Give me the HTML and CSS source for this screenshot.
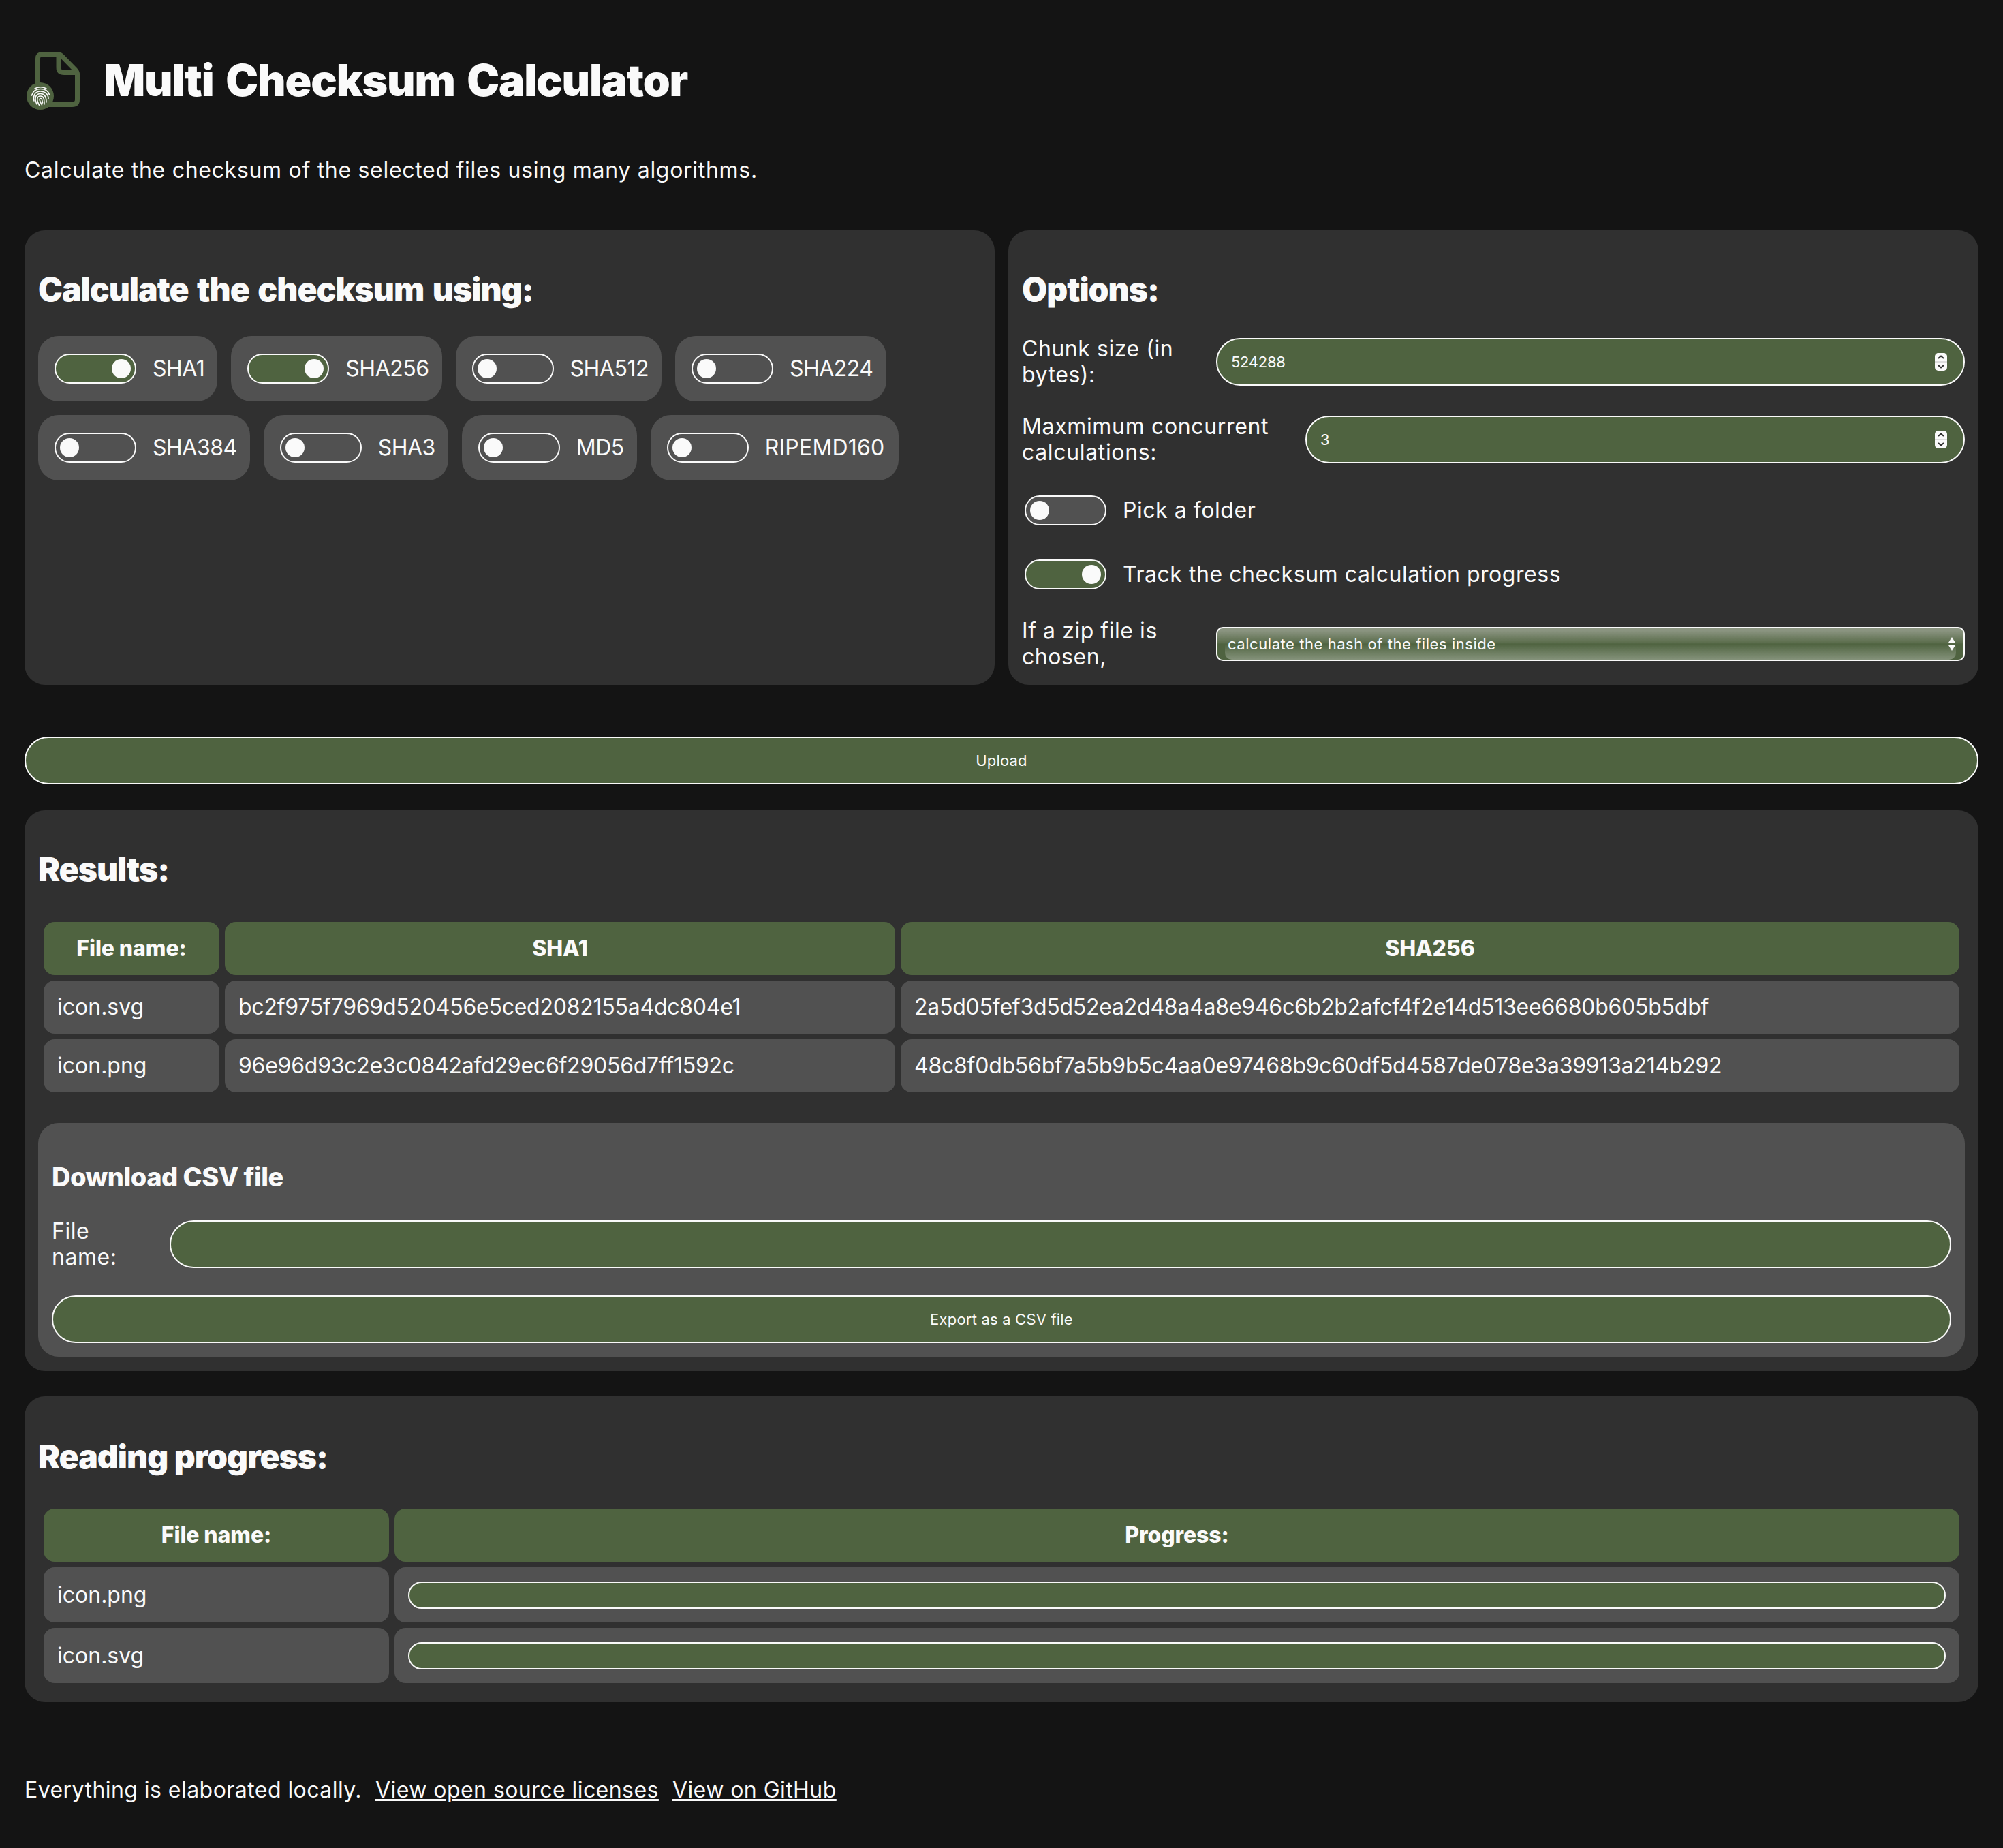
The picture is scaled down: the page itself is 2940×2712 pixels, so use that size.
FILE: index.html
```html
<!DOCTYPE html>
<html lang="en">
<head>
    <meta charset="UTF-8">
    <title>Multi Checksum Calculator</title>
    <link rel="stylesheet" href="styles.css">
</head>
<body>
    <header class="title-row">
        <svg class="logo" width="84" height="96" viewBox="0 0 84 96">
            <path d="M26 9.500 H49 Q52 9.500 55 12.500 L74.500 32.500 Q77.500 35.500 77.500 39 V76 Q77.500 83.500 70 83.500 H26 Q19.500 83.500 19.500 76 V16 Q19.500 9.500 26 9.500 Z" fill="none" stroke="#4f6340" stroke-width="7"/>
            <path d="M50 11 V29 Q50 36.500 58 36.500 H76" fill="none" stroke="#4f6340" stroke-width="7"/>
            <circle cx="23" cy="71" r="20" fill="#4f6340"/>
            <g fill="none" stroke="#fafafa" stroke-width="1.600" stroke-linecap="round">
                <path d="M15 60 Q23.500 55.500 32 60"/>
                <path d="M10.500 70 Q13 60.500 23.500 60.500 Q34 60.500 36.500 69"/>
                <path d="M14 78 C12 68 17 64 23.500 64 C30 64 35 68 35 75"/>
                <path d="M18 83 C14 74 16 67.500 23.500 67.500 C30 67.500 32 72 32 80"/>
                <path d="M22 85 C17 77 18 71 23.500 71 C28 71 29 75 29 83"/>
                <path d="M25.500 84 C22 78 21 74.500 23.500 74.500 C26 74.500 26 78 26.500 81"/>
            </g>
        </svg>
        <h1>Multi Checksum Calculator</h1>
    </header>
    <p class="intro">Calculate the checksum of the selected files using many algorithms.</p>

    <div class="top-grid">
        <section class="panel">
            <h2>Calculate the checksum using:</h2>
            <div class="chips">
                <label class="chip"><span class="toggle on"></span>SHA1</label>
                <label class="chip"><span class="toggle on"></span>SHA256</label>
                <label class="chip"><span class="toggle"></span>SHA512</label>
                <label class="chip"><span class="toggle"></span>SHA224</label>
                <label class="chip"><span class="toggle"></span>SHA384</label>
                <label class="chip"><span class="toggle"></span>SHA3</label>
                <label class="chip"><span class="toggle"></span>MD5</label>
                <label class="chip wide"><span class="toggle"></span>RIPEMD160</label>
            </div>
        </section>
        <section class="panel options">
            <h2>Options:</h2>
            <div class="field chunk">
                <label>Chunk size (in bytes):</label>
                <div class="number-wrap">
                    <input class="text-input" type="text" value="524288">
                    <svg class="spinner" width="18" height="26" viewBox="0 0 18 26">
                        <rect width="18" height="26" rx="5" fill="#fafafa"/>
                        <rect y="12" width="18" height="2" fill="#ddd"/>
                        <path d="M5 8 L9 4.500 L13 8 M5 18 L9 21.500 L13 18" fill="none" stroke="#303030" stroke-width="2"/>
                    </svg>
                </div>
            </div>
            <div class="field concurrent">
                <label>Maxmimum concurrent calculations:</label>
                <div class="number-wrap">
                    <input class="text-input" type="text" value="3">
                    <svg class="spinner" width="18" height="26" viewBox="0 0 18 26">
                        <rect width="18" height="26" rx="5" fill="#fafafa"/>
                        <rect y="12" width="18" height="2" fill="#ddd"/>
                        <path d="M5 8 L9 4.500 L13 8 M5 18 L9 21.500 L13 18" fill="none" stroke="#303030" stroke-width="2"/>
                    </svg>
                </div>
            </div>
            <label class="switch-row first"><span class="toggle grey"></span>Pick a folder</label>
            <label class="switch-row"><span class="toggle on"></span>Track the checksum calculation progress</label>
            <div class="field zip">
                <label>If a zip file is chosen,</label>
                <div class="select-wrap">
                    <select class="select-box">
                        <option>calculate the hash of the files inside</option>
                    </select>
                    <svg class="arrows" width="10" height="20" viewBox="0 0 10 20">
                        <path d="M0 8 L5 0 L10 8 Z M0 12 L10 12 L5 20 Z" fill="#fafafa"/>
                    </svg>
                </div>
            </div>
        </section>
    </div>

    <button class="pill-button upload">Upload</button>

    <section class="panel results">
        <h2>Results:</h2>
        <table class="result-table">
            <colgroup><col class="c-name"><col class="c-sha1"><col class="c-sha256"></colgroup>
            <thead>
                <tr><th>File name:</th><th>SHA1</th><th>SHA256</th></tr>
            </thead>
            <tbody>
                <tr><td>icon.svg</td><td class="hash">bc2f975f7969d520456e5ced2082155a4dc804e1</td><td class="hash">2a5d05fef3d5d52ea2d48a4a8e946c6b2b2afcf4f2e14d513ee6680b605b5dbf</td></tr>
                <tr><td>icon.png</td><td class="hash">96e96d93c2e3c0842afd29ec6f29056d7ff1592c</td><td class="hash">48c8f0db56bf7a5b9b5c4aa0e97468b9c60df5d4587de078e3a39913a214b292</td></tr>
            </tbody>
        </table>
        <div class="download-box">
            <h3>Download CSV file</h3>
            <div class="field csv-name">
                <label>File name:</label>
                <input class="text-input" type="text">
            </div>
            <button class="pill-button export">Export as a CSV file</button>
        </div>
    </section>

    <section class="panel progress-panel">
        <h2>Reading progress:</h2>
        <table class="result-table progress-table">
            <colgroup><col class="p-name"><col class="p-bar"></colgroup>
            <thead>
                <tr><th>File name:</th><th>Progress:</th></tr>
            </thead>
            <tbody>
                <tr><td>icon.png</td><td><div class="bar"></div></td></tr>
                <tr><td>icon.svg</td><td><div class="bar"></div></td></tr>
            </tbody>
        </table>
    </section>

    <footer>
        <span>Everything is elaborated locally.</span>
        <a href="#">View open source licenses</a>
        <a href="#">View on GitHub</a>
    </footer>
</body>
</html>
```

FILE: styles.css
```css
* {
    box-sizing: border-box;
}
body {
    font-family: Inter, "Open Sans", sans-serif;
    font-size: 32px;
    line-height: 38px;
    letter-spacing: 0.55px;
    background-color: #141414;
    color: #fafafa;
    margin: 0;
    padding: 0 36px;
    height: 2712px;
    overflow: hidden;
}
.title-row {
    display: flex;
    align-items: center;
    gap: 32px;
    height: 96px;
    margin-top: 70px;
}
.logo {
    flex: none;
}
h1 {
    font-size: 64px;
    line-height: 76px;
    font-weight: 900;
    letter-spacing: -1.1px;
    word-spacing: 6px;
    margin: 0;
}
.intro {
    margin: 65px 0 0;
    height: 38px;
    letter-spacing: 0.7px;
}
.top-grid {
    display: grid;
    grid-template-columns: 1fr 1fr;
    gap: 20px;
    margin-top: 69px;
}
.panel {
    background: #303030;
    border-radius: 30px;
    padding: 0 20px;
}
h2 {
    font-size: 48px;
    line-height: 58px;
    font-weight: 900;
    letter-spacing: -1px;
    word-spacing: 4px;
    margin: 0;
    padding-top: 58px;
}
.top-grid .panel {
    height: 667px;
}
.chips {
    display: flex;
    flex-wrap: wrap;
    gap: 20px;
    margin-top: 39px;
}
.chip {
    display: flex;
    align-items: center;
    gap: 24px;
    height: 96px;
    padding: 0 19px 0 24px;
    background: #515151;
    border-radius: 30px;
    letter-spacing: -0.5px;
}
.chip.wide {
    padding-right: 21px;
    letter-spacing: 0.2px;
}
.toggle {
    flex: none;
    display: block;
    position: relative;
    width: 120px;
    height: 44px;
    border: 2px solid #fafafa;
    border-radius: 22px;
}
.toggle::after {
    content: "";
    position: absolute;
    top: 6px;
    left: 6px;
    width: 28px;
    height: 28px;
    border-radius: 50%;
    background: #fafafa;
}
.toggle.on {
    background: #4f6340;
}
.toggle.on::after {
    left: 82px;
}
.toggle.grey {
    background: #515151;
}
.field {
    display: flex;
    align-items: center;
    gap: 20px;
}
.field label {
    flex: none;
}
.chunk {
    margin-top: 39px;
}
.chunk label {
    width: 265px;
}
.concurrent {
    margin-top: 38px;
    letter-spacing: 0.65px;
}
.concurrent label {
    width: 396px;
}
.number-wrap {
    position: relative;
    flex: 1;
}
.text-input {
    display: block;
    width: 100%;
    height: 70px;
    padding: 0 20px;
    background: #4f6340;
    border: 2px solid #fafafa;
    border-radius: 35px;
    color: #fafafa;
    font-family: inherit;
    font-size: 22px;
    letter-spacing: -0.3px;
}
.spinner {
    position: absolute;
    top: 22px;
    right: 26px;
}
.switch-row {
    display: flex;
    align-items: center;
    gap: 24px;
    height: 44px;
    margin: 50px 0 0 4px;
}
.switch-row.first {
    margin-top: 44px;
}
.zip {
    margin-top: 42px;
}
.zip label {
    width: 265px;
}
.select-wrap {
    position: relative;
    flex: 1;
    height: 50px;
    border: 2px solid #fafafa;
    border-radius: 10px;
    overflow: hidden;
    background: linear-gradient(#8c9682, #8a9480 8%, #5a6c4b 47%, #4f6340 50%);
}
.select-wrap::before {
    content: "";
    position: absolute;
    left: 11px;
    right: 11px;
    top: 50%;
    bottom: 0;
    border-radius: 0 0 10px 10px;
    background: linear-gradient(#4f6340, #84927a);
}
.select-box {
    position: relative;
    display: block;
    width: 100%;
    height: 100%;
    padding: 0 15px;
    appearance: none;
    background: transparent;
    border: none;
    color: #fafafa;
    font-family: inherit;
    font-size: 22px;
    letter-spacing: 0.55px;
}
.arrows {
    position: absolute;
    top: 13px;
    right: 12px;
}
.pill-button {
    display: block;
    width: 100%;
    height: 70px;
    background: #4f6340;
    border: 2px solid #fafafa;
    border-radius: 35px;
    color: #fafafa;
    font-family: inherit;
    font-size: 22px;
    letter-spacing: 0.2px;
}
.upload {
    margin-top: 76px;
}
.results {
    margin-top: 38px;
    height: 823px;
}
.result-table {
    width: 100%;
    table-layout: fixed;
    border-spacing: 8px;
    margin-top: 40px;
}
.result-table th,
.result-table td {
    height: 78px;
    padding: 0 20px;
    border-radius: 16px;
    line-height: 38px;
}
.result-table th {
    background: #4f6340;
    font-weight: 800;
    letter-spacing: -0.1px;
    text-align: center;
}
.result-table td {
    background: #515151;
    letter-spacing: 0;
}
.result-table td.hash {
    letter-spacing: -0.24px;
}
.c-name {
    width: 258px;
}
.c-sha1 {
    width: 984px;
}
.download-box {
    background: #515151;
    border-radius: 30px;
    padding: 0 20px;
    height: 343px;
    margin-top: 37px;
}
h3 {
    font-size: 38px;
    line-height: 46px;
    font-weight: 800;
    letter-spacing: -0.5px;
    margin: 0;
    padding-top: 56px;
}
.csv-name {
    margin-top: 38px;
}
.csv-name label {
    width: 153px;
}
.csv-name .text-input {
    flex: 1;
    width: auto;
}
.export {
    margin-top: 37px;
}
.progress-panel {
    margin-top: 37px;
    height: 449px;
}
.progress-panel h2 {
    padding-top: 60px;
    word-spacing: 1px;
}
.progress-panel .result-table {
    margin-top: 39px;
}
.p-name {
    width: 507px;
}
.progress-table td {
    height: 81px;
}
.bar {
    height: 40px;
    background: #4f6340;
    border: 2px solid #fafafa;
    border-radius: 20px;
}
footer {
    display: flex;
    gap: 20px;
    margin-top: 110px;
    letter-spacing: 0.45px;
}
footer a {
    color: #fafafa;
    text-decoration: underline;
}
```
